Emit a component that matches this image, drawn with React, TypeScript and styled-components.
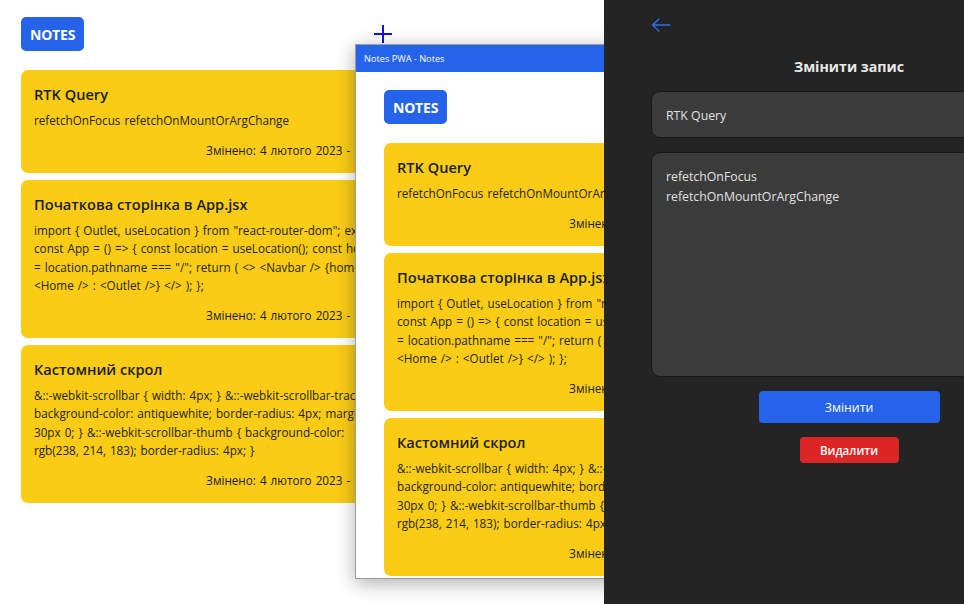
import React from 'react';
import styled, { createGlobalStyle } from 'styled-components';

const uiFont = `"Open Sans", "Noto Sans", "DejaVu Sans", sans-serif`;

const GlobalStyle = createGlobalStyle`
    html, body {
        margin: 0;
        padding: 0;
        overflow: hidden;
        background: #ffffff;
        font-family: ${uiFont};
    }
`;

interface Note {
    id: number;
    title: string;
    body: string;
    updated: string;
}

const notes: Note[] = [
    {
        id: 1,
        title: 'RTK Query',
        body: 'refetchOnFocus refetchOnMountOrArgChange',
        updated: 'Змінено: 4 лютого 2023 - 14:32',
    },
    {
        id: 2,
        title: 'Початкова сторінка в App.jsx',
        body: 'import { Outlet, useLocation } from "react-router-dom"; export const App = () => { const location = useLocation(); const home = location.pathname === "/"; return ( <> <Navbar /> {home ? <Home /> : <Outlet />} </> ); };',
        updated: 'Змінено: 4 лютого 2023 - 13:05',
    },
    {
        id: 3,
        title: 'Кастомний скрол',
        body: '&::-webkit-scrollbar { width: 4px; } &::-webkit-scrollbar-track { background-color: antiquewhite; border-radius: 4px; margin: 30px 0; } &::-webkit-scrollbar-thumb { background-color: rgb(238, 214, 183); border-radius: 4px; }',
        updated: 'Змінено: 4 лютого 2023 - 12:47',
    },
];

const Screen = styled.div`
    display: flex;
    width: 964px;
    height: 604px;
    overflow: hidden;
`;

const Desktop = styled.div`
    position: relative;
    flex: 0 0 604px;
    height: 604px;
    overflow: hidden;
    background: #ffffff;
`;

const NotesPage = styled.main<{ $top: number; $left: number }>`
    display: flex;
    flex-direction: column;
    align-items: flex-start;
    padding: ${p => p.$top}px 0 0 ${p => p.$left}px;
`;

const LogoButton = styled.div`
    height: 34px;
    padding: 0 9px;
    display: flex;
    align-items: center;
    background: #2563eb;
    border-radius: 5px;
    color: #ffffff;
    font-size: 14px;
    font-weight: 700;
    letter-spacing: -0.2px;
    margin-bottom: 19px;
`;

const NoteList = styled.div`
    display: flex;
    flex-direction: column;
    gap: 7px;
`;

const NoteCard = styled.article`
    width: 376px;
    box-sizing: border-box;
    padding: 13px 13px 13.5px 13px;
    background: #facc15;
    border-radius: 7px;
    color: #1c1c1c;
`;

const NoteTitle = styled.h2`
    margin: 0 0 5px;
    font-size: 14.6px;
    line-height: 23px;
    font-weight: 600;
    white-space: nowrap;
`;

const NoteBody = styled.p`
    margin: 0;
    font-size: 11.7px;
    line-height: 18.4px;
    word-spacing: 1px;
    color: #262410;
`;

const NoteDate = styled.div`
    margin-top: 11.5px;
    text-align: right;
    font-size: 11.7px;
    line-height: 18.4px;
    word-spacing: 1px;
    white-space: nowrap;
`;

const AppWindow = styled.div`
    position: absolute;
    left: 355px;
    top: 44px;
    width: 420px;
    height: 535px;
    box-sizing: border-box;
    border: 1px solid #9c9c9c;
    background: #ffffff;
    box-shadow: 0 4px 18px rgba(0, 0, 0, 0.32);
    overflow: hidden;
`;

const TitleBar = styled.div`
    height: 27px;
    display: flex;
    align-items: center;
    padding-left: 8px;
    background: #2563eb;
    color: #ffffff;
    font-size: 9.2px;
`;

const Cursor = styled.svg`
    position: absolute;
    left: 374px;
    top: 25px;
`;

const EditPanel = styled.section`
    position: relative;
    z-index: 1;
    flex: 0 0 490px;
    box-sizing: border-box;
    padding: 18px 47px 0;
    display: flex;
    flex-direction: column;
    background: #242424;
    color: #e6e6e6;
`;

const BackButton = styled.button`
    align-self: flex-start;
    padding: 0;
    border: none;
    background: none;
    display: flex;
    cursor: pointer;
`;

const PanelTitle = styled.h1`
    margin: 24px 0 13px;
    text-align: center;
    font-size: 14.2px;
    line-height: 22px;
    font-weight: 700;
    color: #e8e8e8;
`;

const fieldStyles = `
    width: 100%;
    box-sizing: border-box;
    padding: 14px 14px 12px;
    border: 1px solid #181818;
    border-radius: 9px;
    background: #3b3b3b;
    color: #e2e2e2;
    font-family: ${uiFont};
    font-size: 12.3px;
    line-height: 20px;
    outline: none;
`;

const TitleInput = styled.input`
    ${fieldStyles}
    height: 47px;
`;

const BodyInput = styled.textarea`
    ${fieldStyles}
    height: 225px;
    margin-top: 14px;
    resize: none;
`;

const ActionButton = styled.button<{ $danger?: boolean }>`
    align-self: center;
    margin-top: 14px;
    width: ${p => (p.$danger ? 99 : 181)}px;
    height: ${p => (p.$danger ? 26 : 32)}px;
    border: none;
    border-radius: 4px;
    background: ${p => (p.$danger ? '#dc2626' : '#2563eb')};
    color: #ffffff;
    font-family: ${uiFont};
    font-size: ${p => (p.$danger ? 11.6 : 12.3)}px;
    font-weight: ${p => (p.$danger ? 600 : 500)};
    cursor: pointer;
`;

const NotesView = ({ top, left }: { top: number; left: number }) => (
    <NotesPage $top={top} $left={left}>
        <LogoButton>NOTES</LogoButton>
        <NoteList>
            {notes.map(note => (
                <NoteCard key={note.id}>
                    <NoteTitle>{note.title}</NoteTitle>
                    <NoteBody>{note.body}</NoteBody>
                    <NoteDate>{note.updated}</NoteDate>
                </NoteCard>
            ))}
        </NoteList>
    </NotesPage>
);

const App = () => {
    return (
        <>
            <GlobalStyle />
            <Screen>
                <Desktop>
                    <NotesView top={17} left={21} />
                    <Cursor width="18" height="18" viewBox="0 0 18 18">
                        <path d="M9 0v18M0 9h18" stroke="#1010f0" strokeWidth="2" fill="none" />
                    </Cursor>
                    <AppWindow>
                        <TitleBar>Notes PWA - Notes</TitleBar>
                        <NotesView top={18} left={28} />
                    </AppWindow>
                </Desktop>

                <EditPanel>
                    <BackButton aria-label="Назад">
                        <svg width="20" height="14" viewBox="0 0 20 14" fill="none">
                            <path d="M19 7H1.5M8 1L1.5 7L8 13" stroke="#2f6bf0" strokeWidth="1.4" strokeLinecap="round" strokeLinejoin="round" />
                        </svg>
                    </BackButton>
                    <PanelTitle>Змінити запис</PanelTitle>
                    <TitleInput defaultValue="RTK Query" />
                    <BodyInput defaultValue={'refetchOnFocus\nrefetchOnMountOrArgChange'} />
                    <ActionButton>Змінити</ActionButton>
                    <ActionButton $danger>Видалити</ActionButton>
                </EditPanel>
            </Screen>
        </>
    );
};

export default App;
